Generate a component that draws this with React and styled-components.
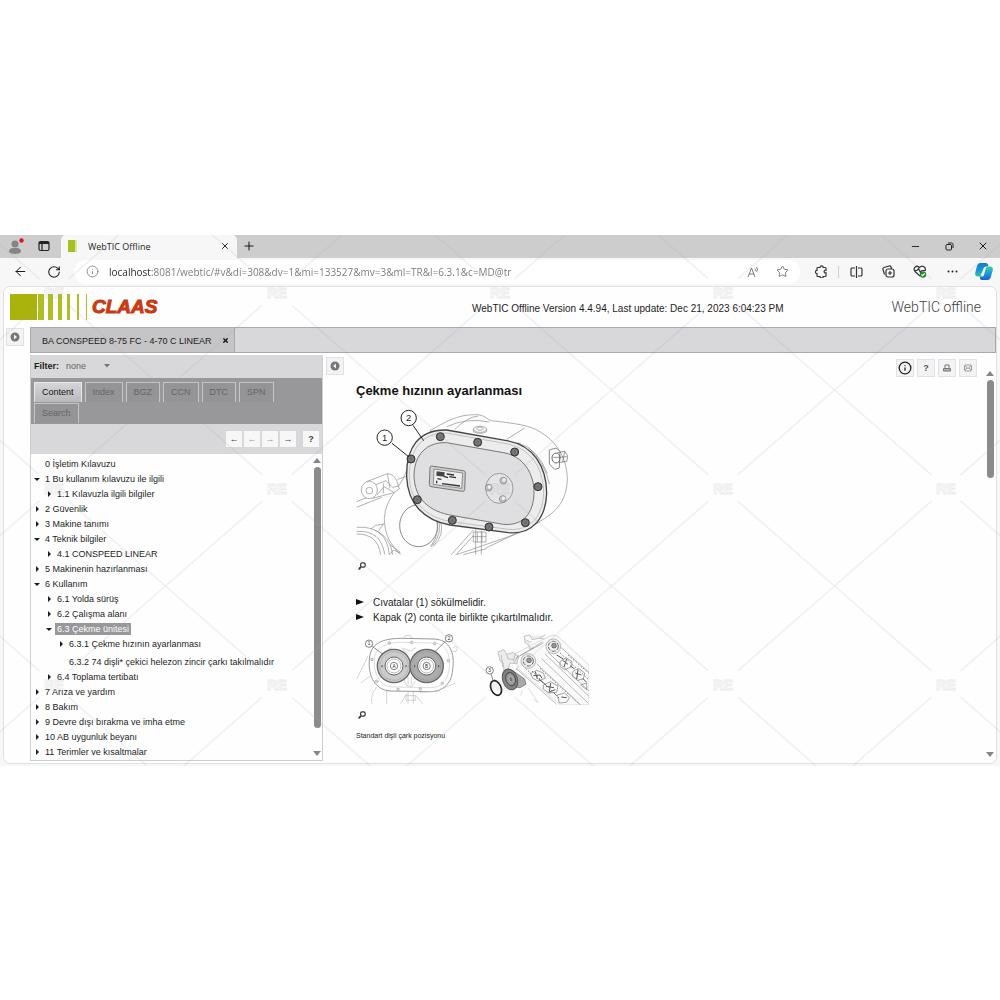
import { useState } from "react"
import styled, { createGlobalStyle } from "styled-components"
import { ArrowLeft, RotateCw, Info, Star, X, Plus, Minus } from "lucide-react"

const tree = [
    { level: 0, label: "0 İşletim Kılavuzu" },
    { level: 0, label: "1 Bu kullanım kılavuzu ile ilgili", state: "open" },
    { level: 1, label: "1.1 Kılavuzla ilgili bilgiler", state: "closed" },
    { level: 0, label: "2 Güvenlik", state: "closed" },
    { level: 0, label: "3 Makine tanımı", state: "closed" },
    { level: 0, label: "4 Teknik bilgiler", state: "open" },
    { level: 1, label: "4.1 CONSPEED LINEAR", state: "closed" },
    { level: 0, label: "5 Makinenin hazırlanması", state: "closed" },
    { level: 0, label: "6 Kullanım", state: "open" },
    { level: 1, label: "6.1 Yolda sürüş", state: "closed" },
    { level: 1, label: "6.2 Çalışma alanı", state: "closed" },
    { level: 1, label: "6.3 Çekme ünitesi", state: "open" },
    { level: 2, label: "6.3.1 Çekme hızının ayarlanması", state: "closed" },
    { level: 2, label: "6.3.2 74 dişli* çekici helezon zincir çarkı takılmalıdır" },
    { level: 1, label: "6.4 Toplama tertibatı", state: "closed" },
    { level: 0, label: "7 Arıza ve yardım", state: "closed" },
    { level: 0, label: "8 Bakım", state: "closed" },
    { level: 0, label: "9 Devre dışı bırakma ve imha etme", state: "closed" },
    { level: 0, label: "10 AB uygunluk beyanı", state: "closed" },
    { level: 0, label: "11 Terimler ve kısaltmalar", state: "closed" }
]

const tabs = ["Content", "Index", "BGZ", "CCN", "DTC", "SPN", "Search"]

const bolts = [[301, 200], [413, 217], [524, 246], [594, 350], [556, 458], [447, 471], [337, 451], [232, 389], [213, 267]]
const coverHoles = [[148, 160], [215, 158], [284, 162], [96, 209], [325, 213], [110, 275], [174, 300], [241, 298], [307, 281]]

function BrowserTabs () {
    return (
        <TabBar>
            <BarButton aria-label="Profile">
                <svg width="16" height="18" viewBox="0 0 16 18">
                    <circle cx="7" cy="7" r="3.500" fill="#858585" />
                    <path d="M1 15c0-4 3-4 6-4s6 0 6 4c-2 2.500-10 2.500-12 0z" fill="#858585" />
                    <circle cx="13.500" cy="3.500" r="2.200" fill="#e3141c" />
                </svg>
            </BarButton>
            <BarButton aria-label="Tab actions">
                <svg width="12" height="12" viewBox="0 0 12 12" fill="none" stroke="#222" strokeWidth="1.200">
                    <rect x="1" y="1.500" width="10" height="9" rx="1.500" />
                    <path d="M1 3h10" strokeWidth="2" />
                    <path d="M4 3v7" />
                </svg>
            </BarButton>
            <BrowserTab>
                <svg width="10" height="12" viewBox="0 0 10 12">
                    <rect width="7" height="12" fill="#a8bf22" />
                    <rect x="7" width="2" height="12" fill="#dbe59a" />
                </svg>
                <span>WebTIC Offline</span>
                <BareButton aria-label="Close tab"><X size={10} strokeWidth={2.400} /></BareButton>
            </BrowserTab>
            <BarButton $narrow aria-label="New tab"><Plus size={14} strokeWidth={1.800} /></BarButton>
            <WindowButtons>
                <BareButton aria-label="Minimize"><Minus size={11} strokeWidth={2} /></BareButton>
                <BareButton aria-label="Restore">
                    <svg width="9" height="9" viewBox="0 0 9 9" fill="none" stroke="#222">
                        <rect x="1" y="2.500" width="5.500" height="5.500" rx="1" />
                        <path d="M3 1h3.500q1.500 0 1.500 1.500V6" />
                    </svg>
                </BareButton>
                <BareButton aria-label="Close"><X size={12} strokeWidth={2} /></BareButton>
            </WindowButtons>
        </TabBar>
    )
}

function BrowserToolbar () {
    const [url, setUrl] = useState("localhost:8081/webtic/#v&di=308&dv=1&mi=133527&mv=3&ml=TR&l=6.3.1&c=MD@tr")

    return (
        <Toolbar>
            <NavButton aria-label="Back"><ArrowLeft size={15} strokeWidth={1.600} /></NavButton>
            <NavButton aria-label="Refresh"><RotateCw size={14} strokeWidth={1.800} /></NavButton>
            <AddressBar>
                <Info size={13} strokeWidth={1.500} color="#777" />
                <input aria-label="Address" value={url} onChange={(e) => setUrl(e.target.value)} />
                <BareButton aria-label="Read aloud">
                    <svg width="13" height="12" viewBox="0 0 13 12" fill="none" stroke="#777">
                        <path d="M1 11L4.500 2 8 11M2.300 8h4.500M8 2.500q1 1 0 2.500M9.500 1q2 2.500 0 5" />
                    </svg>
                </BareButton>
                <BareButton aria-label="Favorite"><Star size={13} strokeWidth={1.600} color="#666" /></BareButton>
            </AddressBar>
            <ToolSlot aria-label="Extensions">
                <svg width="13" height="13" viewBox="0 0 13 13" fill="none" stroke="#333" strokeWidth="1.200">
                    <path d="M3 2.500h2a1.600 1.600 0 0 1 3.200 0h1.800q1 0 1 1v1.800a1.400 1.400 0 1 0 0 2.600v2.600q0 1-1 1H8.200a1.600 1.600 0 0 1-3.200 0H3q-1 0-1-1V8.600a1.600 1.600 0 0 1 0-3.200V3.500q0-1 1-1z" />
                </svg>
            </ToolSlot>
            <Divider />
            <ToolSlot aria-label="Split screen">
                <svg width="13" height="12" viewBox="0 0 13 12" fill="none" stroke="#333" strokeWidth="1.200">
                    <path d="M5 2H2q-1 0-1 1v6q0 1 1 1h3M8 2h3q1 0 1 1v6q0 1-1 1H8M6.500 0v12" />
                </svg>
            </ToolSlot>
            <ToolSlot aria-label="Collections">
                <svg width="13" height="13" viewBox="0 0 13 13" fill="none" stroke="#333" strokeWidth="1.200">
                    <rect x="4" y="4" width="8" height="8" rx="2" />
                    <path d="M2.500 9.500L1 4.500Q.5 3 2 2.500L7 1q1.500-.3 2 1L9.500 4M8 6v4M6 8h4" />
                </svg>
            </ToolSlot>
            <ToolSlot aria-label="Browser essentials">
                <svg width="14" height="13" viewBox="0 0 14 13" fill="none" stroke="#333" strokeWidth="1.200">
                    <path d="M7 11L2 6.500C-.5 3 3.500-.5 6.500 2.500 9.500-.5 13.500 2.500 12 6M1 5.500h3l1.500-2 2 4 1.200-2H12" />
                    <circle cx="10" cy="9.500" r="3.200" fill="#198a2e" stroke="none" />
                    <path d="M8.500 9.500l1.200 1.200 2-2.200" stroke="#fff" />
                </svg>
            </ToolSlot>
            <ToolSlot aria-label="Settings and more">
                <svg width="11" height="3" viewBox="0 0 11 3" fill="#222">
                    <circle cx="1.500" cy="1.500" r="1" /><circle cx="5.500" cy="1.500" r="1" /><circle cx="9.500" cy="1.500" r="1" />
                </svg>
            </ToolSlot>
            <ToolSlot aria-label="Copilot">
                <svg width="18" height="17" viewBox="0 0 18 17">
                    <defs>
                        <linearGradient id="pilotLeft" x1="0" y1="0" x2="0" y2="1">
                            <stop offset="0" stopColor="#1479d4" /><stop offset=".5" stopColor="#1a95d8" /><stop offset="1" stopColor="#35c3a0" />
                        </linearGradient>
                        <linearGradient id="pilotRight" x1="0" y1="0" x2="0" y2="1">
                            <stop offset="0" stopColor="#3fcf9a" /><stop offset=".5" stopColor="#1b9be0" /><stop offset="1" stopColor="#1a62cf" />
                        </linearGradient>
                    </defs>
                    <path d="M5.500 0H11q1.500 0 2 1.500l.5 2H11Q9.500 3.500 9 5L7.500 11Q7 13.500 5 13.500H3Q-.5 13.500.3 9.500L2 3Q3 0 5.500 0z" fill="url(#pilotLeft)" />
                    <path d="M12.500 17H7q-1.500 0-2-1.500l-.3-2H7q1.500 0 2-1.500L10.500 6Q11 3.500 13 3.500h2q3.500 0 2.700 4L15.800 14Q15 17 12.500 17z" fill="url(#pilotRight)" />
                    <path d="M11 4.500L7.500 12.500h-2L9 4.500z" fill="#eef8fb" />
                </svg>
            </ToolSlot>
        </Toolbar>
    )
}

function Magnifier () {
    return (
        <ZoomButton aria-label="Zoom">
            <svg width="8" height="8" viewBox="0 0 8 8" fill="none" stroke="#333" strokeWidth="1.200">
                <rect x="2.600" y=".8" width="4.600" height="4.400" rx="1.600" /><path d="M3 5L.5 7.500M1 5.500l1.500 1.500" />
            </svg>
        </ZoomButton>
    )
}

function GearboxDrawing () {
    return (
        <svg width="212" height="148" viewBox="48 114 636 444" fill="none" stroke="#8a8a8a" strokeWidth="2">
            {/* arm and rings behind the housing */}
            <path d="M203 290C190 350 135 380 133 445c0 50 20 80 48 108M50 395l70-28M50 412l75-30M203 318l-30 10" />
            <path d="M80 335l62-24q18 0 28 20l8 26-20 12-60 16" fill="#fff" />
            <ellipse cx="88" cy="360" rx="24" ry="26" fill="#fff" /><circle cx="88" cy="362" r="10" />
            <path d="M108 344l30-12 20 20 18-4M112 374l20-24 28 16M130 340v30M142 311l8 44" />
            <ellipse cx="236" cy="467" rx="57" ry="63" fill="#fff" strokeWidth="3" />
            <path d="M284 434q22 50-12 96M292 440q20 50-18 90M300 446q16 50-20 82" />
            <path d="M50 472q90-6 98 82M50 484q74-4 84 70M50 492q64 0 72 62M92 478l14-12 26-4M130 462l-14 20M104 480q48 20 54 74" />
            <path d="M400 480l-66 74M410 486l-62 68M540 488l-190 66M600 456l-162 78M440 536l-70 18M150 524l30 22M150 554l10-14 22 10" />
            <path d="M407 478v76M424 482v72M400 486h38v30h-38zM398 500h40M412 486v30M426 486v30" fill="#fff" />
            {/* housing */}
            <path d="M270 182C310 160 350 132 410 134c26 2 32 14 44 18 70 8 120 14 150 36 50 30 76 80 78 135 0 66-32 104-84 132l-90 32z" fill="#fdfdfd" />
            <path d="M345 178q38-38 70-40M320 170q60-28 128-14M500 208l54-34M566 232q50 50 62 110M534 218q60 20 88 92" />
            <ellipse cx="420" cy="178" rx="20" ry="9" /><ellipse cx="420" cy="176" rx="10" ry="5" /><path d="M400 178v7q20 10 40 0v-7" />
            <path d="M628 240l20-6 12 10-2 50-14 4-16-16z" fill="#fff" strokeWidth="3" />
            <ellipse cx="648" cy="264" rx="12" ry="15" stroke="#666" strokeWidth="3" />
            <path d="M652 248l22-4 10 14-4 16-24 4M658 262l24-2M674 244l-6 32M640 262h18" stroke="#666" />
            {/* cover */}
            <path d="M200 320C198 235 235 178 320 180L500 212C580 225 620 290 620 370C618 440 580 495 505 488L330 465C250 450 203 400 200 320Z" fill="#ececec" stroke="#444" strokeWidth="4" />
            <path d="M208 320C207 242 244 188 320 189L498 221C572 234 610 292 611 370C608 435 575 484 505 478L332 455C258 442 210 395 208 320Z" stroke="#aaa" />
            <path d="M222 318C222 255 260 215 320 218L490 248C550 258 583 310 582 370C580 430 550 468 490 463L340 437C265 425 224 385 222 318Z" fill="#dfdfe1" stroke="#777" strokeWidth="3" />
            {bolts.map(([x, y]) => (
                <g key={x}>
                    <circle cx={x} cy={y} r="12" fill="#6a6a6a" stroke="#333" strokeWidth="3" />
                    <path d={`M${x - 6} ${y - 3}l6-4 6 4v6l-6 4-6-4z`} stroke="#8c8c8c" />
                </g>
            ))}
            {/* type plate */}
            <path d="M274 288l96 14q6 1 6 7l-2 50q-1 6-7 5l-94-14q-5-1-5-6l2-50q0-6 4-6z" fill="#cfcfd1" stroke="#777" strokeWidth="3" />
            <path d="M282 297l86 12-3 46-85-12z" fill="#eee" stroke="#666" />
            <path d="M290 304l24 3-1 13-24-3z" fill="#444" stroke="none" />
            <path d="M320 312l22 3M292 326l12 2M312 319l12 4M328 320l20 3M290 332v8M306 341l54 7" stroke="#333" strokeWidth="4" />
            {/* inspection flange */}
            <ellipse cx="478" cy="355" rx="41" ry="45" fill="#e4e4e6" stroke="#777" />
            {[[490, 332], [446, 353], [488, 387]].map(([x, y]) => (
                <g key={y}><circle cx={x} cy={y} r="10" fill="#ccc" stroke="#777" /><circle cx={x + 2} cy={y - 2} r="7" fill="#eee" stroke="#999" /></g>
            ))}
            {/* callouts */}
            <path d="M219 166l32 46M156 220l50 40" stroke="#222" strokeWidth="3" />
            <circle cx="206" cy="144" r="23" fill="#fff" stroke="#222" strokeWidth="3" />
            <circle cx="134" cy="203" r="23" fill="#fff" stroke="#222" strokeWidth="3" />
            <CalloutText x="206" y="154">2</CalloutText>
            <CalloutText x="134" y="213">1</CalloutText>
        </svg>
    )
}

function Sprocket ({ cx, fill }) {
    return (
        <g>
            <circle cx={cx} cy="229" r="50" fill={fill} stroke="#666" strokeWidth="4" />
            <circle cx={cx} cy="229" r="43" strokeDasharray="3 2" stroke="#8a8a8a" />
            <circle cx={cx} cy="229" r="27" fill="#fff" stroke="#666" strokeWidth="3" />
            <circle cx={cx} cy="229" r="21" stroke="#999" />
            <path d={`M${cx - 36} 226v7M${cx + 36} 226v7`} stroke="#555" strokeWidth="3" />
        </g>
    )
}

function SprocketDrawing () {
    return (
        <svg width="233" height="72" viewBox="48 130 699 216" fill="none" stroke="#aaa" strokeWidth="2">
            {/* open gear case */}
            <path d="M90 195C100 150 150 146 190 146l92 2C330 150 345 190 338 240 334 290 300 306 270 306L150 304C100 300 80 250 90 195z" stroke="#999" strokeWidth="3" />
            <path d="M104 200c6-30 40-42 80-42l92 2c40 0 56 30 52 72-4 46-24 62-60 62l-110-2c-44-2-60-50-54-92z" stroke="#ccc" />
            <path d="M84 200l-34 68M92 258l-30 22M110 292q-20 24-14 50M140 304v38M190 146l6-8h16l4 8M200 312l-18 30M204 306v36M220 306v36M198 318h28v14h-28zM226 316l22 26M240 308l60-4M300 300l46-20M338 176l8-6 6 6-4 10-10-2" stroke="#bbb" />
            <path d="M190 176l20 8 18-10M192 270l8 18 16 2 10-16M204 262v22M214 262v22M144 180l12-6M184 174l20 20" stroke="#bbb" />
            {coverHoles.map(([x, y]) => <circle key={x} cx={x} cy={y} r="4" fill="#ddd" />)}
            <Sprocket cx={162} fill="#cbcbcb" />
            <Sprocket cx={260} fill="#adadad" />
            <path d="M97 170l32 24M316 155l-30 30" stroke="#555" />
            {/* row unit frame */}
            <path d="M526 192l88-46 24-10q14 0 22 10l87 80v120h-86l-128-110z" fill="#fafafa" stroke="#ccc" />
            <path d="M474 186l18-6 8 14 20-6 16 14-6 20-20-2-8 28-10-2-2-26-10-6zM552 140l18-4 6 14 22-4 18-10M552 140l4 20 10 6 4 14 12-6" fill="#ececec" stroke="#aaa" />
            <path d="M484 196l4 36M500 194l4 14 18 2M560 152l16 6M526 192l-6 22M598 146l16 2" stroke="#aaa" />
            <path d="M528 236l122 108M590 222l130 122M604 206l140 134M614 192l133 128M624 188l123 116M664 174l83 74M528 206l80-50M522 220l14-24M540 198l70-38" stroke="#9a9a9a" />
            <path d="M572 252l18-10 20 8 6 16-22 8-16-8zM610 286l22-10 22 14-4 18-24 2-16-12zM652 316l22-6 14 14-8 14-22 2zM660 216l18-12 18 12-2 16-20 8-14-10zM698 246l18-10 18 14-4 18-18 4-14-12zM722 286l18-6v20z" stroke="#777" />
            <path d="M580 258l20-2 6 10M586 246l6 22M618 290l24 4M632 280l-4 26M640 308l10 10M664 322l16 2M668 212l16 12M680 208l-8 24M706 250l18 6M714 240l-4 28M650 196l20 12M690 228l14 10M728 266l12 12M596 268l22 18M646 300l-20 8" stroke="#555" strokeWidth="3" />
            <path d="M600 236l130 118M576 244l84 84M660 190l84 78M684 196l62 54M556 236l20 18" stroke="#888" strokeWidth="3" strokeDasharray="5 5" />
            {[[565, 214], [640, 170]].map(([x, y]) => (
                <g key={x}>
                    <circle cx={x} cy={y} r="22" fill="#efefef" stroke="#999" />
                    <circle cx={x} cy={y} r="15" stroke="#666" strokeWidth="3" strokeDasharray="12 4" />
                    <circle cx={x + 2} cy={y - 2} r="7" fill="#999" stroke="#444" />
                </g>
            ))}
            <path d="M520 244l34 24 4 16-18 10-14-2" fill="#aaa" stroke="#666" />
            <g transform="rotate(-18 510 269)">
                <ellipse cx="510" cy="269" rx="22" ry="32" fill="#808080" stroke="#555" strokeWidth="3" />
                <ellipse cx="512" cy="269" rx="14" ry="20" fill="#999" stroke="#4a4a4a" strokeWidth="3" />
                <ellipse cx="513" cy="270" rx="6" ry="9" fill="#777" stroke="#ccc" />
            </g>
            <path d="M548 300l-6 18M566 296l28 42M580 330l14 8" stroke="#ccc" />
            <ellipse cx="468" cy="295" rx="15" ry="23" stroke="#1c1c1c" strokeWidth="5" transform="rotate(-24 468 295)" />
            <path d="M453 253l6 18" stroke="#555" />
            {[[87, 162, "1"], [327, 146, "2"], [449, 242, "3"], [162, 229, "A"], [260, 229, "B"]].map(([x, y, label]) => (
                <g key={label}>
                    <circle cx={x} cy={y} r="11" fill="#fff" stroke="#444" />
                    <CalloutText $small x={x} y={y + 5}>{label}</CalloutText>
                </g>
            ))}
        </svg>
    )
}

function Watermark () {
    return (
        <WatermarkLayer aria-hidden="true">
            <defs>
                <pattern id="mark" x="54" y="57" width="223" height="196" patternUnits="userSpaceOnUse" patternTransform="translate(-111.500 -98)">
                    <path d="M0 0L97 85M126 111L223 196M223 0L126 85M97 111L0 196" stroke="#a8a2ae" strokeOpacity=".2" strokeWidth="1.300" />
                    <text x="111.500" y="104" textAnchor="middle" fontFamily="Liberation Sans" fontWeight="700" fontSize="14" fill="none" stroke="#999" strokeOpacity=".22">RE</text>
                </pattern>
            </defs>
            <rect width="100%" height="100%" fill="url(#mark)" />
        </WatermarkLayer>
    )
}

function ToggleIcon ({ direction }) {
    return (
        <svg width="10" height="10" viewBox="0 0 10 10">
            <circle cx="5" cy="5" r="4.500" fill="#777" />
            <path d={direction === "left" ? "M6 2.500v5L3 5z" : "M4 2.500v5L7 5z"} fill="#f4f4f4" />
        </svg>
    )
}

export default function App () {
    const [activeTab, setActiveTab] = useState("Content")
    const [selected, setSelected] = useState(11)

    return (
        <Page>
            <GlobalStyle />
            <BrowserWindow>
                <BrowserTabs />
                <BrowserToolbar />
                <Frame>
                    <Header>
                        <svg width="78" height="26" viewBox="0 0 78 26">
                            <rect width="27" height="26" fill="#aab30c" />
                            <g fill="#b0be22">
                                <rect x="28" width="6" height="26" /><rect x="38" width="5" height="26" /><rect x="48" width="4" height="26" />
                                <rect x="57" width="3" height="26" /><rect x="67" width="2" height="26" /><rect x="76" width="1" height="26" />
                            </g>
                        </svg>
                        <Brand>CLAAS</Brand>
                        <Version>WebTIC Offline Version 4.4.94, Last update: Dec 21, 2023 6:04:23 PM</Version>
                        <Product>WebTIC offline</Product>
                    </Header>
                    <Main>
                        <Rail>
                            <SquareButton aria-label="Expand">
                                <ToggleIcon direction="right" />
                            </SquareButton>
                        </Rail>
                        <Workspace>
                            <DocumentTabs>
                                <DocumentTab>
                                    BA CONSPEED 8-75 FC - 4-70 C LINEAR
                                    <BareButton aria-label="Close document"><X size={7} strokeWidth={5} /></BareButton>
                                </DocumentTab>
                            </DocumentTabs>
                            <Columns>
                                <Sidebar>
                                    <FilterRow>
                                        <label htmlFor="filter">Filter:</label>
                                        <select id="filter" defaultValue="none"><option>none</option></select>
                                        <svg width="6" height="4" viewBox="0 0 6 4"><path d="M0 0h6L3 3.500z" fill="#777" /></svg>
                                    </FilterRow>
                                    <SideTabs>
                                        {tabs.map(tab => (
                                            <SideTab key={tab} $active={tab === activeTab} onClick={() => setActiveTab(tab)}>{tab}</SideTab>
                                        ))}
                                    </SideTabs>
                                    <TreeToolbar>
                                        <SmallButton aria-label="First">←</SmallButton>
                                        <SmallButton $faded aria-label="Previous">←</SmallButton>
                                        <SmallButton $faded aria-label="Next">→</SmallButton>
                                        <SmallButton aria-label="Last">→</SmallButton>
                                        <SmallButton $spaced aria-label="Help">?</SmallButton>
                                    </TreeToolbar>
                                    <TreeArea>
                                        <Tree>
                                            {tree.map((item, index) => (
                                                <TreeRow key={item.label} $level={item.level} $leaf={item.level === 2 && !item.state}>
                                                    <Arrow $state={item.state} />
                                                    <TreeLink href="#" $selected={index === selected} onClick={(e) => { e.preventDefault(); setSelected(index) }}>{item.label}</TreeLink>
                                                </TreeRow>
                                            ))}
                                        </Tree>
                                        <ScrollTrack><ArrowUp /><Thumb $length={261} /><ArrowDown /></ScrollTrack>
                                    </TreeArea>
                                </Sidebar>
                                <Collapse>
                                    <SquareButton aria-label="Collapse">
                                        <ToggleIcon direction="left" />
                                    </SquareButton>
                                </Collapse>
                                <Article>
                                    <h1>Çekme hızının ayarlanması</h1>
                                    <Figure>
                                        <GearboxDrawing />
                                        <Magnifier />
                                    </Figure>
                                    <Steps>
                                        <li>Cıvatalar (1) sökülmelidir.</li>
                                        <li>Kapak (2) conta ile birlikte çıkartılmalıdır.</li>
                                    </Steps>
                                    <Figure>
                                        <SprocketDrawing />
                                        <Magnifier />
                                        <figcaption>Standart dişli çark pozisyonu</figcaption>
                                    </Figure>
                                </Article>
                                <Actions>
                                    <SquareButton aria-label="Information"><Info size={14} strokeWidth={2.200} color="#222" /></SquareButton>
                                    <SquareButton aria-label="Help">?</SquareButton>
                                    <SquareButton aria-label="Print">
                                        <svg width="8" height="8" viewBox="0 0 8 8" fill="none" stroke="#777"><path d="M2 4.500V1h4v3.500M.5 4.500h7v2.500h-7zM1 6h6" /></svg>
                                    </SquareButton>
                                    <SquareButton aria-label="Mail">
                                        <svg width="8" height="8" viewBox="0 0 8 8" fill="none" stroke="#999"><rect x=".5" y="1" width="7" height="6" rx="1" /><path d="M1 2l3 2.500L7 2M1 6l2-2M7 6L5 4" /></svg>
                                    </SquareButton>
                                </Actions>
                                <ScrollTrack $tall><ArrowUp /><Thumb $length={98} /><ArrowDown /></ScrollTrack>
                            </Columns>
                        </Workspace>
                    </Main>
                </Frame>
                <Watermark />
            </BrowserWindow>
        </Page>
    )
}

//Styled Components//
const GlobalStyle = createGlobalStyle`
    * {
        box-sizing: border-box;
    }

    body {
        margin: 0;
        background-color: #ffffff;
        font-family: "Liberation Sans", Arial, sans-serif;
        color: #1c1c1c;
    }

    button, input, select {
        font-family: inherit;
        margin: 0;
        padding: 0;
        border: none;
        background: none;
        color: inherit;
    }

    svg {
        display: block;
        flex-shrink: 0;
    }
`

const Page = styled.div`
    min-height: 100vh;
    display: flex;
    flex-direction: column;
    justify-content: center;
`

const BrowserWindow = styled.div`
    position: relative;
    background-color: #f7f7f7;
    overflow: hidden;
`

const BareButton = styled.button`
    display: flex;
    align-items: center;
    justify-content: center;
    cursor: pointer;
`

const TabBar = styled.div`
    display: flex;
    height: 23px;
    padding-left: 2px;
    background-color: #cdcdcd;
    font-family: "Open Sans", "Noto Sans", sans-serif;
    font-size: 9px;
`

const BarButton = styled(BareButton)`
    width: ${({ $narrow }) => $narrow ? "24px" : "28px"};
`

const BrowserTab = styled.div`
    display: flex;
    align-items: center;
    flex: 0 1 176px;
    margin-left: 3px;
    padding: 0 7px;
    border-radius: 5px 5px 0 0;
    background-color: #f7f7f7;

    span {
        flex: 1;
        padding-left: 10px;
    }
`

const WindowButtons = styled.div`
    display: flex;
    margin-left: auto;

    button {
        width: 34px;
    }
`

const Toolbar = styled.div`
    display: flex;
    align-items: center;
    height: 28px;
    padding-left: 4px;
`

const NavButton = styled(BareButton)`
    width: 33px;
    height: 24px;
`

const AddressBar = styled.div`
    display: flex;
    align-items: center;
    flex: 1;
    gap: 10px;
    height: 24px;
    margin: 0 5px 0 4px;
    padding: 0 8px 0 12px;
    border-radius: 12px;
    background-color: #ffffff;

    input {
        flex: 1;
        min-width: 0;
        font-family: "Open Sans", "Noto Sans", sans-serif;
        font-size: 10px;
        outline: none;
        /* host part is darker than the rest of the address */
        background-image: linear-gradient(to right, #222222 43px, #777777 43px);
        -webkit-background-clip: text;
        background-clip: text;
        -webkit-text-fill-color: transparent;
    }

    button {
        width: 19px;
    }
`

const ToolSlot = styled(BareButton)`
    width: 32px;
    height: 24px;
`

const Divider = styled.div`
    width: 1px;
    height: 12px;
    margin: 0 1px;
    background-color: #d0d0d0;
`

const Frame = styled.div`
    margin: 0 3px 2px;
    border: 1px solid #e0dfe1;
    border-radius: 7px;
    background-color: #fefefe;
`

const Header = styled.header`
    display: flex;
    align-items: center;
    height: 40px;
    padding: 0 15px 0 6px;
`

const Brand = styled.span`
    margin-left: 4px;
    font-size: 19px;
    font-weight: 700;
    font-style: italic;
    color: #c93a10;
    -webkit-text-stroke: 1px #c93a10;
`

const Version = styled.span`
    margin-left: auto;
    padding-top: 3px;
    font-size: 10px;
`

const Product = styled.span`
    margin-left: 108px;
    font-family: Roboto, sans-serif;
    font-size: 14px;
    font-weight: 300;
    color: #444444;
`

const Main = styled.main`
    display: flex;
`

const Rail = styled.div`
    flex: 0 0 26px;
    padding: 1px 0 0 2px;
`

const SquareButton = styled(BareButton)`
    width: 18px;
    height: 18px;
    border: 1px solid #e2e1e3;
    background-color: #f3f2f4;
    font-size: 9px;
    font-weight: 700;
    color: #555555;
`

const Workspace = styled.div`
    flex: 1;
    min-width: 0;
`

const DocumentTabs = styled.div`
    display: flex;
    height: 26px;
    border: 1px solid #aaa9ab;
    background-color: #d8d7d9;
`

const DocumentTab = styled.div`
    display: flex;
    align-items: center;
    gap: 10px;
    padding: 2px 5px 0 11px;
    border-right: 1px solid #aaa9ab;
    background-color: #c5c4c6;
    font-size: 9px;
`

const Columns = styled.div`
    display: flex;
    padding: 2px 1px 2px 0;
`

const Sidebar = styled.aside`
    flex: 0 0 293px;
    border: 1px solid #cfced0;
    border-top: none;
`

const FilterRow = styled.div`
    display: flex;
    align-items: center;
    height: 23px;
    padding-left: 3px;
    background-color: #d8d7d9;
    font-size: 9px;

    label {
        font-weight: 700;
    }

    select {
        width: 38px;
        margin-left: 7px;
        appearance: none;
        font-size: 9px;
        color: #666666;
    }
`

const SideTabs = styled.div`
    display: flex;
    flex-wrap: wrap;
    gap: 1px 3px;
    padding: 4px 20px 1px 3px;
    background-color: #989799;
`

const SideTab = styled.button`
    height: 20px;
    padding: 0 7px;
    border: 1px solid ${({ $active }) => $active ? "#e8e7e9" : "#c4c3c5"};
    border-bottom: none;
    background: ${({ $active }) => $active ? "linear-gradient(#d6d5d7, #b9b8ba)" : "#949395"};
    font-size: 9px;
    color: ${({ $active }) => $active ? "#111111" : "#666666"};
    cursor: pointer;
`

const TreeToolbar = styled.div`
    display: flex;
    align-items: center;
    justify-content: flex-end;
    gap: 2px;
    height: 30px;
    padding-right: 3px;
    background-color: #d8d7d9;
`

const SmallButton = styled(BareButton)`
    width: 16px;
    height: 16px;
    margin-left: ${({ $spaced }) => $spaced ? "5px" : "0"};
    background-color: #f7f7f8;
    font-size: 9px;
    font-weight: 700;
    color: ${({ $faded }) => $faded ? "#999999" : "#444444"};
`

const TreeArea = styled.div`
    display: flex;
    justify-content: space-between;
    background-color: #fefefe;
`

const Tree = styled.ul`
    margin: 0;
    padding: 3px 0 0;
    list-style: none;
`

const TreeRow = styled.li`
    display: flex;
    align-items: center;
    height: ${({ $leaf }) => $leaf ? "18px" : "15px"};
    padding-top: ${({ $leaf }) => $leaf ? "3px" : "0"};
    padding-left: ${({ $level }) => $level * 12 + 3}px;
    font-size: 9px;
`

const Arrow = styled.span`
    width: 0;
    height: 0;
    margin: ${({ $state }) => $state === "open" ? "0 3px 0 0" : "0 4px 0 2px"};
    border: 3px solid transparent;
    ${({ $state }) => $state === "open" && "border-top-color: #1c1c1c; border-bottom-width: 0;"}
    ${({ $state }) => $state === "closed" && "border-left-color: #1c1c1c; border-right-width: 0;"}
    ${({ $state }) => !$state && "margin-right: 1px;"}
`

const TreeLink = styled.a`
    padding: 1px 2px;
    white-space: nowrap;
    text-decoration: none;
    color: ${({ $selected }) => $selected ? "#ffffff" : "#1c1c1c"};
    background-color: ${({ $selected }) => $selected ? "#989799" : "transparent"};
`

const ScrollTrack = styled.div`
    display: flex;
    flex-direction: column;
    align-items: center;
    width: 10px;
    padding: ${({ $tall }) => $tall ? "16px 0 4px" : "4px 0"};
`

const ArrowUp = styled.span`
    border: 4px solid transparent;
    border-top-width: 0;
    border-bottom: 5px solid #868587;
`

const ArrowDown = styled.span`
    margin-top: auto;
    border: 4px solid transparent;
    border-bottom-width: 0;
    border-top: 5px solid #868587;
`

const Thumb = styled.div`
    width: 7px;
    height: ${({ $length }) => $length}px;
    margin-top: 4px;
    border-radius: 4px;
    background-color: #8b8a8c;
`

const Collapse = styled.div`
    padding: 2px 0 0 3px;
`

const Article = styled.article`
    flex: 1;
    min-width: 0;
    padding: 28px 0 0 12px;

    h1 {
        margin: 0 0 9px;
        font-size: 13px;
        line-height: 16px;
        color: #111111;
    }
`

const Figure = styled.figure`
    margin: 0;

    figcaption {
        margin-top: 12px;
        font-size: 7px;
        line-height: 10px;
    }
`

const ZoomButton = styled(BareButton)`
    margin: 6px 2px 0;
`

const Steps = styled.ul`
    margin: 25px 0 8px;
    padding: 0;
    list-style: none;
    font-size: 10px;
    line-height: 15px;

    li {
        display: flex;
        align-items: center;
    }

    li::before {
        content: "";
        margin-right: 9px;
        border: 3px solid transparent;
        border-left: 8px solid #111111;
        border-right: none;
    }
`

const Actions = styled.div`
    display: flex;
    align-items: flex-start;
    gap: 3px;
    padding: 4px 8px 0 0;
`

const CalloutText = styled.text`
    font-family: "Liberation Sans", Arial, sans-serif;
    font-size: ${({ $small }) => $small ? "14px" : "28px"};
    text-anchor: middle;
    fill: #222222;
    stroke: none;
`

const WatermarkLayer = styled.svg`
    position: absolute;
    inset: 0;
    width: 100%;
    height: 100%;
    pointer-events: none;
`
